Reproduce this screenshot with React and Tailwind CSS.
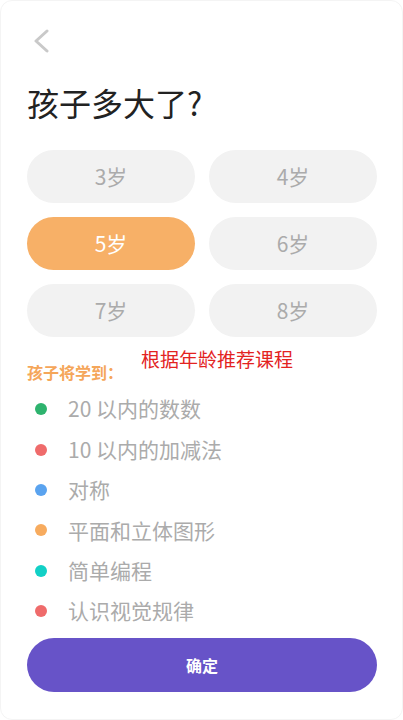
import React, { useState } from 'react';

const AGES = [3, 4, 5, 6, 7, 8];

const TOPICS = [
  { text: '20 以内的数数', color: 'bg-[#2eb36e]' },
  { text: '10 以内的加减法', color: 'bg-[#ef6b6b]' },
  { text: '对称', color: 'bg-[#5aa3ef]' },
  { text: '平面和立体图形', color: 'bg-[#f7ab5e]' },
  { text: '简单编程', color: 'bg-[#12d0c6]' },
  { text: '认识视觉规律', color: 'bg-[#ef6b6b]' },
];

const FONT = { fontFamily: '"Noto Sans CJK SC", "Noto Sans", sans-serif' };

export default function App() {
  const [age, setAge] = useState(5);

  return (
    <div className="w-[403px] h-[720px] bg-white overflow-hidden rounded-[12px] border border-[#f4f4f4]" style={FONT}>
      <div className="pl-[26px] pr-[25px]">
        {/* Back */}
        <div className="pt-[28px] pl-[5px]">
          <svg width="18" height="24" viewBox="0 0 18 24" fill="none">
            <polyline points="15,2 4,12 15,22" stroke="#c9c9c9" strokeWidth="3" strokeLinecap="round" strokeLinejoin="round" />
          </svg>
        </div>

        {/* Title */}
        <h1 className="mt-[30px] text-[32px] leading-[38px] text-[#222]">孩子多大了?</h1>

        {/* Age grid */}
        <div className="mt-[29px] grid grid-cols-2 gap-x-[14px] gap-y-[14px]">
          {AGES.map((a) => (
            <button
              key={a}
              onClick={() => setAge(a)}
              className={`h-[53px] rounded-full text-[21px] ${
                a === age ? 'bg-[#f7b067] text-white' : 'bg-[#f2f2f2] text-[#ababab]'
              }`}
            >
              {a}岁
            </button>
          ))}
        </div>

        {/* Learn label */}
        <div className="mt-[12px] flex items-start">
          <span className="mt-[15px] text-[16px] leading-none font-bold text-[#f5a65a]">孩子将学到：</span>
          <span className="ml-[18px] text-[19px] leading-none text-[#e3231f]">根据年龄推荐课程</span>
        </div>

        {/* Topics */}
        <ul className="mt-[9px]">
          {TOPICS.map((t) => (
            <li key={t.text} className="h-[40.4px] flex items-center">
              <span className={`ml-[8px] w-3 h-3 rounded-full ${t.color}`} />
              <span className="ml-[21px] text-[21px] text-[#ababab]">{t.text}</span>
            </li>
          ))}
        </ul>

        {/* Confirm */}
        <button className="mt-[7px] w-full h-[54px] rounded-full bg-[#6753c8] text-white text-[16px] font-bold">
          确定
        </button>
      </div>
    </div>
  );
}
